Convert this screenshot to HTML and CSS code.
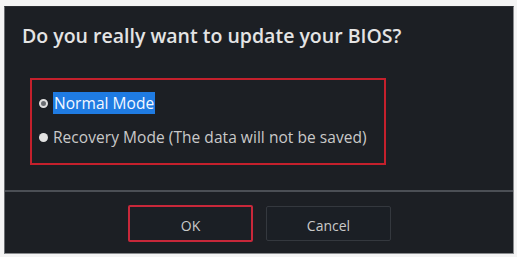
FILE: index.html
```html
<!DOCTYPE html>
<html>
<head>
<meta charset="utf-8">
<link rel="stylesheet" href="styles.css">
</head>
<body>
<div class="dialog">
  <div class="content">
    <h1 class="title">Do you really want to update your BIOS?</h1>
    <div class="options">
      <div class="option">
        <span class="radio checked"></span>
        <span class="label selected">Normal Mode</span>
      </div>
      <div class="option">
        <span class="radio"></span>
        <span class="label">Recovery Mode (The data will not be saved)</span>
      </div>
    </div>
  </div>
  <div class="footer">
    <button class="btn btn-ok">OK</button>
    <button class="btn btn-cancel">Cancel</button>
  </div>
</div>
</body>
</html>
```
FILE: styles.css
```css
html, body {
  margin: 0;
  padding: 0;
  background: #f4f4f4;
}
body {
  width: 517px;
  height: 257px;
  padding: 6px 3px 3px 4px;
  box-sizing: border-box;
  font-family: "Open Sans", "Liberation Sans", sans-serif;
}
.dialog {
  height: 248px;
  background: #1c1f24;
  border: 1px solid #8a8c8f;
  border-top-color: #2a2d31;
  border-left-color: #6b6e72;
  display: flex;
  flex-direction: column;
  box-sizing: border-box;
}
.content {
  padding: 0 0 0 17px;
  height: 183px;
  box-sizing: border-box;
}
.title {
  margin: 17px 0 0 0;
  font-size: 19.5px;
  font-weight: 600;
  color: #e4e4e4;
  letter-spacing: 0;
  line-height: 24px;
}
.options {
  margin: 30px 0 0 8px;
  width: 356px;
  height: 87px;
  border: 2px solid #c4202c;
  box-sizing: border-box;
  padding: 12px 0 0 7px;
}
.option {
  display: flex;
  align-items: center;
  height: 22px;
  margin-bottom: 12px;
}
.radio {
  width: 9px;
  height: 9px;
  border-radius: 50%;
  background: #e2e2e2;
  margin-right: 5px;
  box-sizing: border-box;
  flex: none;
}
.radio.checked {
  border: 2.5px solid #e0e0e0;
  background: #6a6d72;
}
.label {
  font-size: 15.5px;
  color: #c9c9c9;
  line-height: 22px;
  letter-spacing: 0.05px;
}
.label.selected {
  background: #1f7be2;
  color: #f4f8ff;
  padding: 0 1px;
}
.footer {
  flex: 1;
  border-top: 2px solid #4b4f55;
  display: flex;
  gap: 13px;
  padding: 13px 0 0 123px;
}
.btn {
  width: 125px;
  height: 37px;
  background: #1b1f25;
  color: #c9c9c9;
  font-family: "Open Sans", "Liberation Sans", sans-serif;
  font-size: 14px;
  padding: 3px 0 0 0;
  border: 1px solid #34383e;
  border-radius: 2px;
}
.btn-ok {
  border: 2px solid #c8283a;
}
.btn-cancel {
  height: 35px;
  margin-top: 1px;
}
```
